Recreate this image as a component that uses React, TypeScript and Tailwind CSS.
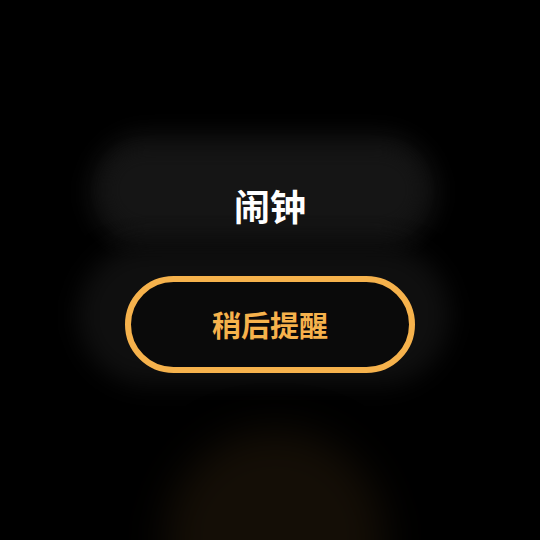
export default function App() {
  return (
    <div
      className="relative w-[540px] h-[540px] overflow-hidden bg-black"
      style={{ fontFamily: '"Noto Sans CJK SC", "Noto Sans", sans-serif' }}
    >
      {/* faint background blobs */}
      <div className="absolute left-[88px] top-[132px] w-[350px] h-[120px] rounded-[60px] bg-[#101010] blur-[10px]" />
      <div className="absolute left-[105px] top-[150px] w-[315px] h-[80px] rounded-[40px] bg-[#151515] blur-[8px]" />
      <div className="absolute left-[78px] top-[245px] w-[372px] h-[140px] rounded-[70px] bg-[#0f0f0f] blur-[12px]" />
      <div className="absolute left-[165px] top-[430px] w-[220px] h-[220px] rounded-full bg-[#140e06] blur-[20px]" />

      <div className="relative flex flex-col items-center pt-[180px]">
        <h1 className="text-[36px] leading-[50px] font-bold text-white">闹钟</h1>
        <button className="mt-[46px] w-[290px] h-[97px] rounded-full border-[6px] border-[#f6b24c] bg-[#0a0a0a] flex items-center justify-center">
          <span className="text-[29px] font-bold text-[#f6b24c]">稍后提醒</span>
        </button>
      </div>
    </div>
  );
}
